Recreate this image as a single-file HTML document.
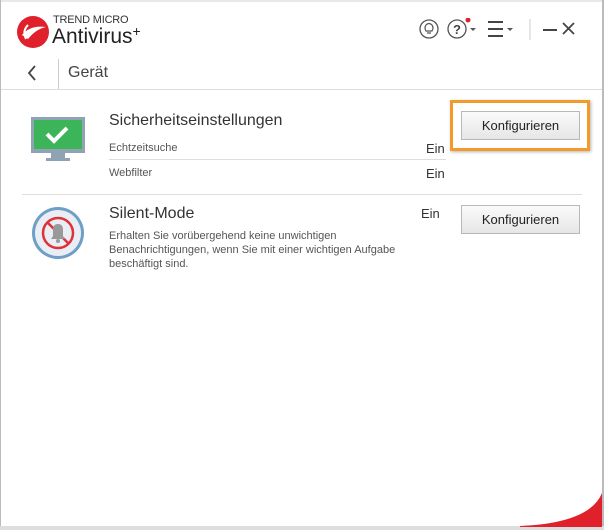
<!DOCTYPE html>
<html><head><meta charset="utf-8"><style>
*{margin:0;padding:0;box-sizing:border-box}
body{width:604px;height:530px;background:#fff;position:relative;overflow:hidden;font-family:"Liberation Sans",sans-serif;color:#333}
.a{position:absolute}
.btn{position:absolute;width:119px;height:29px;border:1px solid #b8b8b8;background:linear-gradient(#fafafa,#e6e6e6);font-size:13px;color:#222;text-align:center;line-height:27px}
.t{font-size:11px;color:#555}
</style></head><body>
<div class="a" style="left:0;top:0;width:604px;height:2px;background:#e8e8e8"></div>
<div class="a" style="left:0;top:0;width:1px;height:530px;background:#bbb"></div>
<div class="a" style="left:602px;top:0;width:2px;height:530px;background:#bbb"></div>
<div class="a" style="left:0;top:526px;width:604px;height:4px;background:#ddd"></div>
<!-- logo -->
<svg class="a" style="left:16px;top:15px" width="34" height="34" viewBox="0 0 34 34"><circle cx="17" cy="17" r="16" fill="#e0202a"/><path d="M6 20 Q14 10 30 12 Q20 14 12 24 Z" fill="#fff"/><path d="M10 24 Q6 16 12 10" stroke="#fff" stroke-width="2" fill="none"/></svg>
<div class="a" style="left:53px;top:14px;font-size:11px;color:#333;letter-spacing:-0.2px">TREND MICRO</div>
<div class="a" style="left:52px;top:25px;font-size:21px;color:#222">Antivirus<span style="font-size:14px;vertical-align:top;position:relative;top:-2px">+</span></div>
<!-- top icons -->
<svg class="a" style="left:418px;top:18px" width="160" height="26" viewBox="0 0 160 26">
<circle cx="11" cy="11" r="9" fill="none" stroke="#555" stroke-width="1.3"/><path d="M8 13 Q6 10 8 7 Q11 4 14 7 Q16 10 14 13 Z M9 15h4" fill="none" stroke="#555" stroke-width="1.2"/>
<circle cx="39" cy="11" r="9" fill="none" stroke="#555" stroke-width="1.3"/><text x="39" y="16" font-size="13" text-anchor="middle" fill="#444" font-family="Liberation Sans" font-weight="bold">?</text>
<circle cx="50" cy="2" r="2.5" fill="#e0202a"/><path d="M52 10h6l-3 3z" fill="#555"/>
<path d="M70 4h15M70 11h15M70 18h15" stroke="#444" stroke-width="2"/><path d="M89 10h6l-3 3z" fill="#555"/>
<path d="M112 1v21" stroke="#ccc"/><path d="M125 12h14" stroke="#444" stroke-width="2"/><path d="M156 5l-11 11M145 5l11 11" stroke="#444" stroke-width="1.8"/>
</svg>
<!-- nav -->
<svg class="a" style="left:26px;top:64px" width="12" height="18"><path d="M9 2L3 9l6 7" fill="none" stroke="#444" stroke-width="1.8"/></svg>
<div class="a" style="left:58px;top:59px;width:1px;height:30px;background:#ccc"></div>
<div class="a" style="left:68px;top:64px;font-size:16px;color:#444">Gerät</div>
<div class="a" style="left:1px;top:89px;width:601px;height:1px;background:#ddd"></div>
<!-- section 1 -->
<svg class="a" style="left:31px;top:117px" width="54" height="46" viewBox="0 0 54 46"><rect x="0" y="0" width="54" height="36" fill="#8fa3b3"/><rect x="3" y="3" width="48" height="29" fill="#3cb55a"/><path d="M16 17l7 7 13-13" stroke="#fff" stroke-width="4" fill="none"/><rect x="20" y="36" width="14" height="5" fill="#8fa3b3"/><rect x="15" y="41" width="24" height="3" fill="#8fa3b3"/></svg>
<div class="a" style="left:109px;top:112px;font-size:16px;color:#333">Sicherheitseinstellungen</div>
<div class="a t" style="left:109px;top:142px">Echtzeitsuche</div>
<div class="a" style="left:426px;top:141px;font-size:13px">Ein</div>
<div class="a" style="left:109px;top:159px;width:337px;height:1px;background:#ddd"></div>
<div class="a t" style="left:109px;top:167px">Webfilter</div>
<div class="a" style="left:426px;top:166px;font-size:13px">Ein</div>
<div class="a" style="left:450px;top:100px;width:140px;height:51px;border:3px solid #f39a2c;box-shadow:1px 1px 3px rgba(0,0,0,.3)"></div>
<div class="btn" style="left:461px;top:111px">Konfigurieren</div>
<div class="a" style="left:22px;top:194px;width:560px;height:1px;background:#ddd"></div>
<!-- section 2 -->
<svg class="a" style="left:31px;top:206px" width="54" height="54" viewBox="0 0 54 54"><circle cx="27" cy="27" r="26" fill="#6f9ec7"/><circle cx="27" cy="27" r="23" fill="#e8eef3"/><circle cx="27" cy="27" r="15" fill="none" stroke="#e0303a" stroke-width="2.5"/><path d="M17 17l20 20" stroke="#e0303a" stroke-width="2.5"/><path d="M20 33h14l-2-3v-6q0-6-5-6q-5 0-5 6v6z" fill="#999"/><circle cx="27" cy="35" r="2" fill="#999"/></svg>
<div class="a" style="left:109px;top:205px;font-size:16px;color:#333">Silent-Mode</div>
<div class="a" style="left:109px;top:229px;font-size:11px;color:#555;line-height:14px;width:330px">Erhalten Sie vorübergehend keine unwichtigen<br>Benachrichtigungen, wenn Sie mit einer wichtigen Aufgabe<br>beschäftigt sind.</div>
<div class="a" style="left:421px;top:206px;font-size:13px">Ein</div>
<div class="btn" style="left:461px;top:205px">Konfigurieren</div>
<svg class="a" style="left:520px;top:493px" width="82" height="34" viewBox="0 0 82 34"><path d="M0 33 Q70 30 82 0 V34 H0Z" fill="#e0202a"/></svg>
</body></html>
